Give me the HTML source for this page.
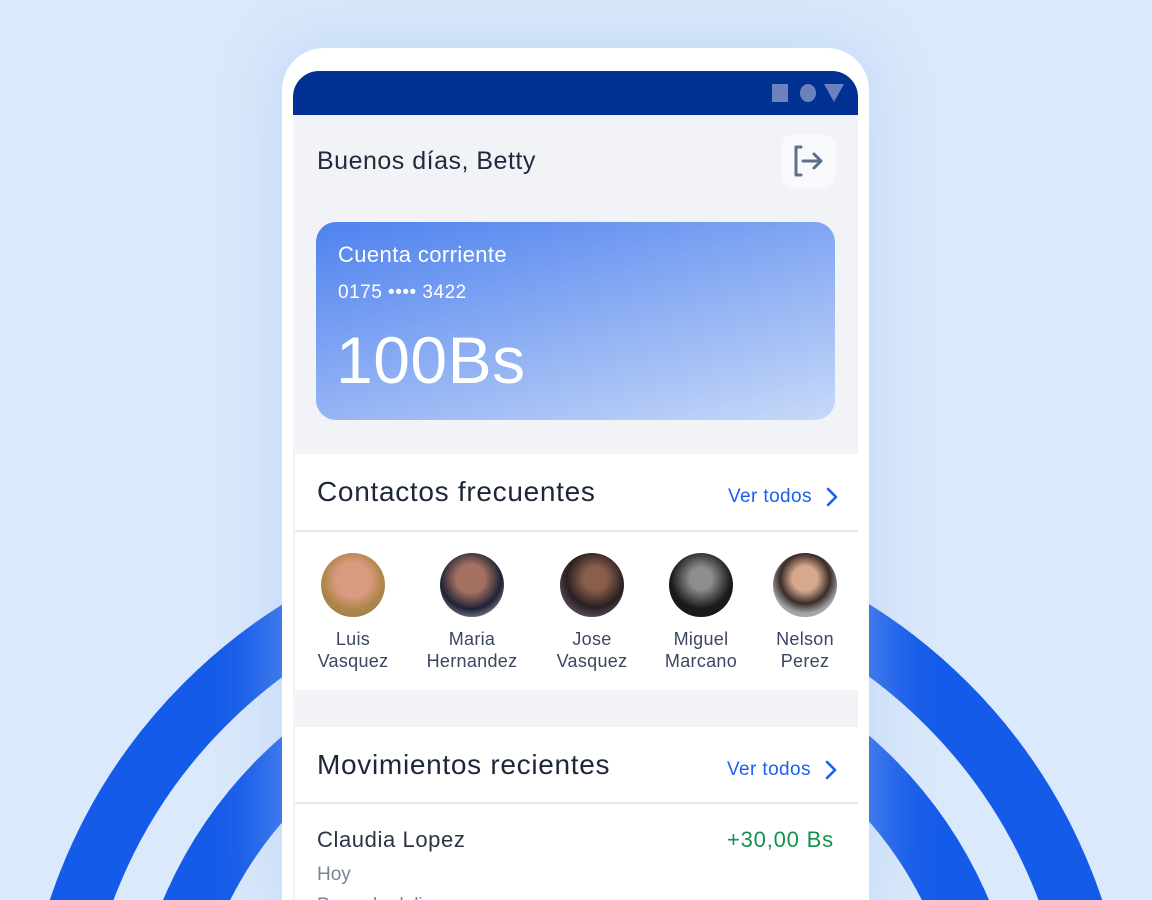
<!DOCTYPE html>
<html><head><meta charset="utf-8"><style>
*{margin:0;padding:0;box-sizing:border-box}
html,body{width:1152px;height:900px;overflow:hidden}
body{background:#dae9fb;font-family:"Liberation Sans",sans-serif;position:relative}
.abs{position:absolute}
.phone{left:282px;top:48px;width:587px;height:852px;background:#fff;border-radius:42px 42px 0 0;box-shadow:0 0 60px 10px rgba(170,200,245,0.45)}
.screen{left:293px;top:71px;width:565px;height:829px;background:#f2f3f7;border-radius:26px 26px 0 0;overflow:hidden}
.status{left:0;top:0;width:565px;height:44px;background:#023194}
.t{position:absolute;white-space:nowrap}
.card{left:23px;top:151px;width:519px;height:198px;border-radius:20px;background:linear-gradient(165deg,#4e82ef 0%,#8badf3 50%,#c8d9f9 100%)}
.sec{background:#fff;left:2px;width:563px}
.av{position:absolute;width:64px;height:64px;border-radius:50%;top:21px}
.nm{position:absolute;top:96px;width:120px;text-align:center;font-size:18px;line-height:22px;color:#3b4660;letter-spacing:0.3px}
.vt{color:#1b5ff0;font-size:19px;letter-spacing:0.4px}
.h{font-size:28px;color:#1d2738;letter-spacing:0.7px}
</style></head><body>
<svg class="abs" style="left:0;top:0" width="1152" height="900">
<circle cx="576" cy="1075" r="524.5" fill="none" stroke="#155be9" stroke-width="60"/>
<circle cx="576" cy="1075" r="418" fill="none" stroke="#155be9" stroke-width="61"/>
</svg>
<div class="abs phone"></div>
<div class="abs screen">
 <div class="abs status">
  <div class="abs" style="left:479px;top:13px;width:16px;height:18px;background:#6b82bd"></div>
  <div class="abs" style="left:507px;top:13px;width:16px;height:18px;border-radius:50%;background:#6b82bd"></div>
  <svg class="abs" style="left:531px;top:13px" width="20" height="18"><polygon points="0,0 20,0 10,18" fill="#6b82bd"/></svg>
 </div>
 <div class="t" style="left:24px;top:76px;font-size:25px;color:#1f2a3d;letter-spacing:0.5px">Buenos días, Betty</div>
 <div class="abs" style="left:488px;top:63px;width:55px;height:55px;border-radius:14px;background:#f8f9fb">
  <svg width="55" height="55" viewBox="0 0 55 55" fill="none" stroke="#5f6e8a" stroke-width="3" stroke-linecap="round" stroke-linejoin="round">
   <path d="M20 13h-5v28h5"/><path d="M22 27h18M33 20l7 7-7 7"/></svg>
 </div>
 <div class="abs card">
  <div class="t" style="left:22px;top:20px;font-size:22px;color:#fff;letter-spacing:0.4px">Cuenta corriente</div>
  <div class="t" style="left:22px;top:60px;font-size:19px;color:#fff;letter-spacing:0.5px">0175 •••• 3422</div>
  <div class="t" style="left:20px;top:100px;font-size:66px;color:#fff;letter-spacing:0.5px">100Bs</div>
 </div>
 <div class="abs sec" style="top:383px;height:236px">
  <div class="t h" style="left:22px;top:22px">Contactos frecuentes</div>
  <div class="t vt" style="left:433px;top:32px">Ver todos</div>
  <svg class="abs" style="left:530px;top:32px" width="14" height="22" fill="none" stroke="#1b5ff0" stroke-width="2.6" stroke-linecap="round" stroke-linejoin="round"><path d="M3 3l8 8-8 8"/></svg>
  <div class="abs" style="left:0;top:76px;width:563px;height:2px;background:#e6e7ea"></div>
  <div class="abs" style="top:78px;left:0;width:563px;height:158px">
   <div class="av" style="left:26px;background:radial-gradient(circle at 50% 42%,#d99a80 0 35%,#b0864a 60%,#8a7a55)"></div>
   <div class="av" style="left:145px;background:radial-gradient(circle at 48% 40%,#a47160 0 28%,#1e2236 60%,#d8d8de)"></div>
   <div class="av" style="left:265px;background:radial-gradient(circle at 55% 40%,#8a5e4c 0 22%,#2a1f22 55%,#8a7f9a)"></div>
   <div class="av" style="left:374px;background:radial-gradient(circle at 50% 40%,#8d8d8d 0 22%,#1a1a1a 60%)"></div>
   <div class="av" style="left:478px;background:radial-gradient(circle at 50% 40%,#d6a88e 0 25%,#3a2c28 50%,#a5a5a8 70%)"></div>
   <div class="nm" style="left:-2px">Luis<br>Vasquez</div>
   <div class="nm" style="left:117px">Maria<br>Hernandez</div>
   <div class="nm" style="left:237px">Jose<br>Vasquez</div>
   <div class="nm" style="left:346px">Miguel<br>Marcano</div>
   <div class="nm" style="left:450px">Nelson<br>Perez</div>
  </div>
 </div>
 <div class="abs sec" style="top:656px;height:200px">
  <div class="t h" style="left:22px;top:22px">Movimientos recientes</div>
  <div class="t vt" style="left:432px;top:32px">Ver todos</div>
  <svg class="abs" style="left:529px;top:32px" width="14" height="22" fill="none" stroke="#1b5ff0" stroke-width="2.6" stroke-linecap="round" stroke-linejoin="round"><path d="M3 3l8 8-8 8"/></svg>
  <div class="abs" style="left:0;top:75px;width:563px;height:2px;background:#e6e7ea"></div>
  <div class="t" style="left:22px;top:100px;font-size:22px;color:#2b3346;letter-spacing:0.6px">Claudia Lopez</div>
  <div class="t" style="left:432px;top:100px;font-size:22px;color:#13924f;letter-spacing:0.8px">+30,00 Bs</div>
  <div class="t" style="left:22px;top:137px;font-size:19px;color:#7b8497">Hoy</div>
  <div class="t" style="left:22px;top:168px;font-size:19px;color:#7b8497">Pago de deli</div>
 </div>
</div>
</body></html>
